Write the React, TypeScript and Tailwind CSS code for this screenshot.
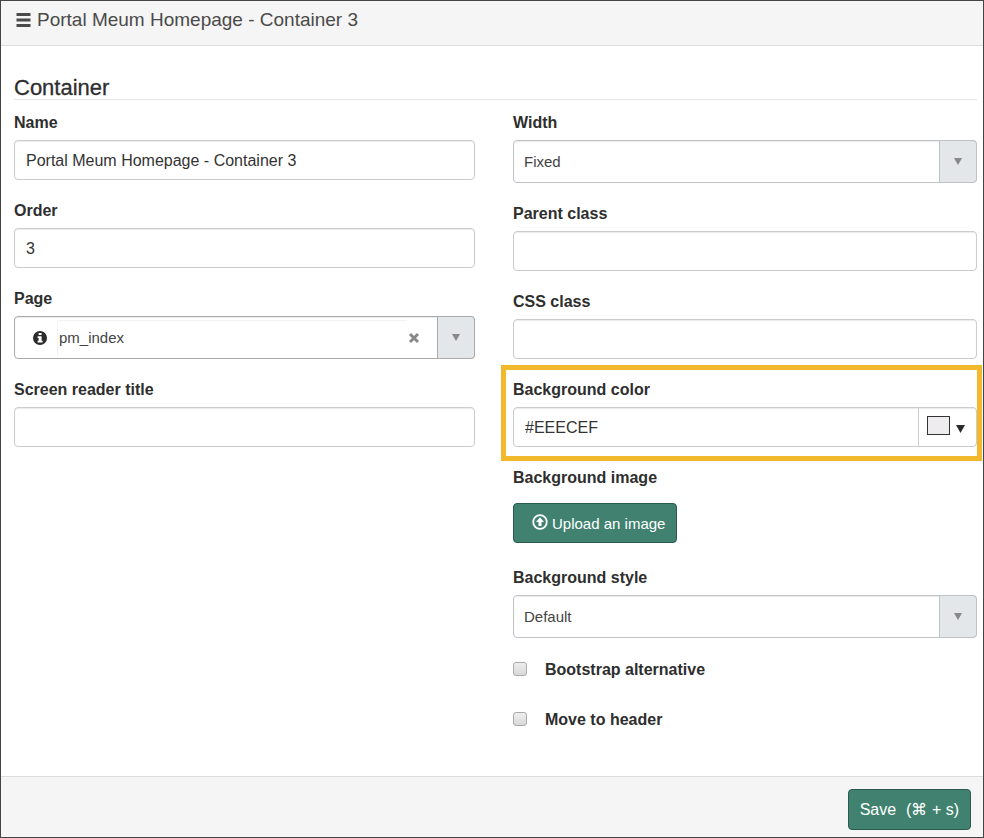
import { useState } from "react";
import type { ReactNode } from "react";

const inputClass =
  "h-10 w-full rounded border border-[#ccc] bg-white px-[11px] pt-[2px] text-base text-[#333] shadow-[inset_0_1px_1px_rgba(0,0,0,0.08)]";

function Field({ id, label, children }: { id: string; label: string; children: ReactNode }) {
  return (
    <div className="flex flex-col gap-1">
      <label htmlFor={id} className="text-base leading-[26px] font-bold">
        {label}
      </label>
      {children}
    </div>
  );
}

function Triangle({ className }: { className: string }) {
  return (
    <svg viewBox="0 0 8 7" className={className} aria-hidden="true">
      <path d="M0 0h8L4 7z" fill="currentColor" />
    </svg>
  );
}

function ArrowBox({ className }: { className: string }) {
  return (
    <span
      className={`pointer-events-none absolute flex w-[38px] items-center justify-center rounded-r border bg-[#e4e7ea] text-[#888] ${className}`}
    >
      <Triangle className="h-[7px] w-2" />
    </span>
  );
}

function SelectField({ id, label, options }: { id: string; label: string; options: string[] }) {
  return (
    <Field id={id} label={label}>
      <div className="relative">
        <select
          id={id}
          className="h-[43px] w-full appearance-none rounded border border-[#bfc3c7] bg-white pt-[2px] pr-12 pl-[10px] text-[15px] text-[#444] shadow-[inset_0_1px_1px_rgba(0,0,0,0.08)]"
        >
          {options.map((option) => (
            <option key={option}>{option}</option>
          ))}
        </select>
        <ArrowBox className="inset-y-0 right-0 border-[#bfc3c7]" />
      </div>
    </Field>
  );
}

function TextField({ id, label, initial = "" }: { id: string; label: string; initial?: string }) {
  return (
    <Field id={id} label={label}>
      <input id={id} type="text" defaultValue={initial} className={inputClass} />
    </Field>
  );
}

function CheckField({ id, label }: { id: string; label: string }) {
  return (
    <div className="flex items-center gap-[18px]">
      <input
        id={id}
        type="checkbox"
        className="mb-[2px] size-[14px] appearance-none rounded-[3px] border border-[#aaa] bg-linear-to-b from-[#eee] to-[#d8d8d8] checked:from-[#40826f] checked:to-[#40826f]"
      />
      <label htmlFor={id} className="text-base leading-6 font-bold">
        {label}
      </label>
    </div>
  );
}

function PageField() {
  const [page, setPage] = useState("pm_index");
  return (
    <Field id="page" label="Page">
      <div className="relative flex h-[43px] items-center rounded border border-[#aaa] bg-white pr-[53px] pl-[17px] shadow-[inset_0_1px_1px_rgba(0,0,0,0.08)]">
        <svg viewBox="0 0 16 16" className="size-4 shrink-0" aria-hidden="true">
          <circle cx="8" cy="8" r="7" fill="#2b2b2b" />
          <path d="M6.6 2.9h3v2.2h-3zM5.6 6.2h4v4.6h1v1.8h-5v-1.8h1V8h-1z" fill="#fff" />
        </svg>
        <select
          id="page"
          value={page}
          onChange={(event) => setPage(event.target.value)}
          className="ml-[9px] h-9 min-w-0 flex-1 appearance-none rounded-tl border-t border-l border-[#f3f3f3] pl-px text-[15px] text-[#444]"
        >
          <option value=""></option>
          <option value="pm_index">pm_index</option>
        </select>
        <button type="button" aria-label="Clear page" onClick={() => setPage("")} className="p-[1px] text-[#888]">
          <svg viewBox="0 0 12 12" className="size-3" aria-hidden="true">
            <path d="M2 2l8 8M10 2l-8 8" stroke="currentColor" strokeWidth="3" fill="none" />
          </svg>
        </button>
        <ArrowBox className="-inset-y-px -right-px border-[#aaa]" />
      </div>
    </Field>
  );
}

function ColorField() {
  const [color, setColor] = useState("#EEECEF");
  return (
    <div className="relative">
      <Field id="background-color" label="Background color">
        <div className="flex h-10 rounded border border-[#ccc] bg-white shadow-[inset_0_1px_1px_rgba(0,0,0,0.08)]">
          <input
            id="background-color"
            type="text"
            value={color}
            onChange={(event) => setColor(event.target.value)}
            className="min-w-0 flex-1 px-[11px] pt-[2px] text-base text-[#333]"
          />
          <button
            type="button"
            aria-label="Pick a color"
            className="flex w-[58px] items-center border-l border-[#ccc] pl-2 text-[#2b2b2b]"
          >
            <span className="mb-[3px] h-[19px] w-[23px] border border-[#333]" style={{ backgroundColor: color }} />
            <Triangle className="mt-[3px] ml-[6px] h-2 w-[9px]" />
          </button>
        </div>
      </Field>
      <div className="pointer-events-none absolute -top-3 -right-[5px] -bottom-[14px] -left-3 border-5 border-[#f2b92d]" />
    </div>
  );
}

export default function App() {
  return (
    <form
      onSubmit={(event) => event.preventDefault()}
      className="flex min-h-screen flex-col border border-[#444] bg-white font-['Liberation_Sans',Arial,sans-serif] text-[#2e2e2e]"
    >
      <header className="flex h-[45px] items-center gap-[6px] border-b border-[#ddd] bg-[#f5f5f5] pb-[7px] pl-[15px] text-[#4a4a4a]">
        <svg viewBox="0 0 14 14" className="h-[14px] w-[15px]" aria-hidden="true">
          <path d="M0 0h14v3H0zM0 5.5h14v3H0zM0 11h14v3H0z" fill="currentColor" />
        </svg>
        <h1 className="text-[19px] leading-6">Portal Meum Homepage - Container 3</h1>
      </header>

      <main className="flex-1 pt-[30px] pr-[6px] pb-6 pl-[13px]">
        <h2 className="border-b border-[#e5e5e5] text-[22px] leading-[23px] [-webkit-text-stroke:0.3px]">Container</h2>
        <div className="mt-[10px] grid grid-cols-[461fr_464fr] gap-[38px]">
          <div className="flex flex-col gap-[18px]">
            <TextField id="name" label="Name" initial="Portal Meum Homepage - Container 3" />
            <TextField id="order" label="Order" initial="3" />
            <PageField />
            <TextField id="screen-reader-title" label="Screen reader title" />
          </div>

          <div className="flex flex-col gap-[18px]">
            <SelectField id="width" label="Width" options={["Fixed", "Fluid"]} />
            <TextField id="parent-class" label="Parent class" />
            <TextField id="css-class" label="CSS class" />
            <ColorField />
            <div className="flex flex-col items-start gap-3 pb-1">
              <h3 className="text-base leading-[26px] font-bold">Background image</h3>
              <button
                type="button"
                className="flex h-10 items-center gap-1 rounded border border-[#285a4e] bg-[#40826f] pr-[11px] pl-[18px] text-[15px] text-white"
              >
                <svg viewBox="0 0 16 16" className="mb-[3px] size-4" aria-hidden="true">
                  <circle cx="8" cy="8" r="6.8" fill="none" stroke="currentColor" strokeWidth="1.8" />
                  <path d="M8 3.2L12 8H9.5v4h-3V8H4z" fill="currentColor" />
                </svg>
                <span className="pt-[2px]">Upload an image</span>
              </button>
            </div>
            <SelectField id="background-style" label="Background style" options={["Default", "Cover"]} />
            <div className="flex flex-col gap-[26px] pt-[2px]">
              <CheckField id="bootstrap-alternative" label="Bootstrap alternative" />
              <CheckField id="move-to-header" label="Move to header" />
            </div>
          </div>
        </div>
      </main>

      <footer className="flex justify-end border-t border-[#ddd] bg-[#f5f5f5] pt-3 pr-3 pb-[7px]">
        <button
          type="submit"
          className="flex h-[41px] items-center gap-[10px] rounded border border-[#285a4e] bg-[#40826f] px-[11px] text-base text-white"
        >
          <span>Save</span>
          <span>(⌘ + s)</span>
        </button>
      </footer>
    </form>
  );
}
